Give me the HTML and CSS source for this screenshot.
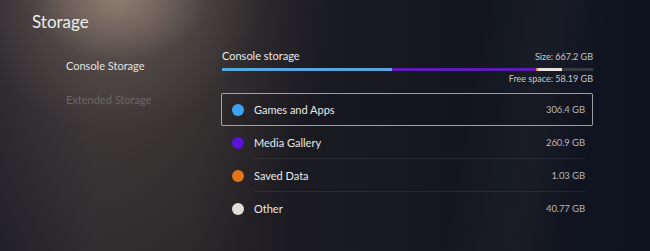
FILE: index.html
```html
<!DOCTYPE html>
<html lang="en">
<head>
<meta charset="utf-8">
<title>Storage</title>
<link rel="stylesheet" href="styles.css">
</head>
<body>
<div class="screen">
  <h1 class="title">Storage</h1>
  <div class="main">
    <nav class="sidebar">
      <div class="nav-item active">Console Storage</div>
      <div class="nav-item dim">Extended Storage</div>
    </nav>
    <section class="content">
      <div class="head">
        <span class="label">Console storage</span>
        <span class="meta">Size: 667.2 GB</span>
      </div>
      <div class="bar">
        <span class="seg seg-games"></span>
        <span class="seg seg-media"></span>
        <span class="seg seg-saved"></span>
        <span class="seg seg-other"></span>
      </div>
      <div class="free meta">Free space: 58.19 GB</div>
      <ul class="list">
        <li class="row selected">
          <span class="dot dot-games"></span>
          <span class="body"><span class="name">Games and Apps</span><span class="value">306.4 GB</span></span>
        </li>
        <li class="row">
          <span class="dot dot-media"></span>
          <span class="body sep"><span class="name">Media Gallery</span><span class="value">260.9 GB</span></span>
        </li>
        <li class="row">
          <span class="dot dot-saved"></span>
          <span class="body sep"><span class="name">Saved Data</span><span class="value">1.03 GB</span></span>
        </li>
        <li class="row">
          <span class="dot dot-other"></span>
          <span class="body"><span class="name">Other</span><span class="value">40.77 GB</span></span>
        </li>
      </ul>
    </section>
  </div>
</div>
</body>
</html>
```
FILE: styles.css
```css
html, body {
  margin: 0;
  padding: 0;
  background: #15161e;
}

.screen {
  width: 650px;
  height: 251px;
  overflow: hidden;
  font-family: Lato, "Liberation Sans", sans-serif;
  color: #e6e6e6;
  background:
    radial-gradient(ellipse 90px 60px at 118px 0px, rgba(190, 165, 145, 0.45), rgba(190, 165, 145, 0) 100%),
    radial-gradient(ellipse 150px 140px at 115px -10px, rgba(150, 130, 115, 0.35), rgba(150, 130, 115, 0) 100%),
    radial-gradient(ellipse 220px 320px at 115px -30px, rgba(115, 102, 95, 0.5), rgba(90, 80, 76, 0.25) 60%, rgba(60, 55, 55, 0) 100%),
    linear-gradient(100deg, rgba(255,255,255,0) 70%, rgba(255,255,255,0.03) 80%, rgba(255,255,255,0) 88%),
    linear-gradient(to right, #222029 0%, #2e2a2d 15%, #2b2729 30%, #1c1b22 45%, #141720 70%, #0f1320 100%);
}

.title {
  margin: 0;
  padding: 12px 0 0 32px;
  height: 20px;
  font-size: 17px;
  font-weight: 400;
  line-height: 20px;
  color: #ececec;
}

.main {
  display: flex;
  margin-top: -1px;
}

.sidebar {
  width: 221px;
  padding-top: 28px;
  box-sizing: border-box;
}

.nav-item {
  padding-left: 66px;
  font-size: 11px;
  line-height: 14px;
  color: #e4e2e0;
}

.nav-item + .nav-item {
  margin-top: 20px;
}

.nav-item.dim {
  color: #6c6663;
}

.content {
  width: 372px;
  padding-top: 18px;
}

.head {
  display: flex;
  justify-content: space-between;
  align-items: baseline;
  padding-left: 1px;
}

.label {
  font-size: 11px;
  line-height: 14px;
  color: #e8e8e8;
}

.meta {
  font-size: 9px;
  line-height: 12px;
  color: #c8c8c8;
}

.bar {
  display: flex;
  height: 3px;
  margin: 5px 0 0 1px;
  background: #383a42;
}

.seg {
  display: block;
  height: 100%;
}

.seg-games { width: 170px; background: #58a6de; }
.seg-media { width: 144px; background: #5a1cb4; }
.seg-saved { width: 2px; background: #d9955a; }
.seg-other { width: 24px; background: #e9e5dd; }

.free {
  margin-top: 2px;
  text-align: right;
}

.list {
  list-style: none;
  margin: 8px 0 0;
  padding: 0;
}

.row {
  display: flex;
  align-items: center;
  height: 33px;
  box-sizing: border-box;
  padding: 0 7px 0 10px;
  border: 1.5px solid transparent;
  border-radius: 2px;
}

.row.selected {
  border-color: rgba(205, 205, 210, 0.75);
  background: rgba(10, 10, 14, 0.12);
}

.dot {
  width: 12px;
  height: 12px;
  border-radius: 50%;
  flex: none;
  margin-right: 10px;
}

.dot-games { background: #3ea2f2; }
.dot-media { background: #5a12d8; }
.dot-saved { background: #e2741a; }
.dot-other { background: #e0ddd6; }

.body {
  flex: 1;
  align-self: stretch;
  display: flex;
  align-items: center;
  justify-content: space-between;
}

.body.sep {
  border-bottom: 1px solid rgba(255, 255, 255, 0.07);
  margin-bottom: -1px;
}

.name {
  font-size: 11px;
  color: #e8e8e8;
}

.value {
  font-size: 9.5px;
  color: #b6b6b8;
  letter-spacing: -0.1px;
}
```
